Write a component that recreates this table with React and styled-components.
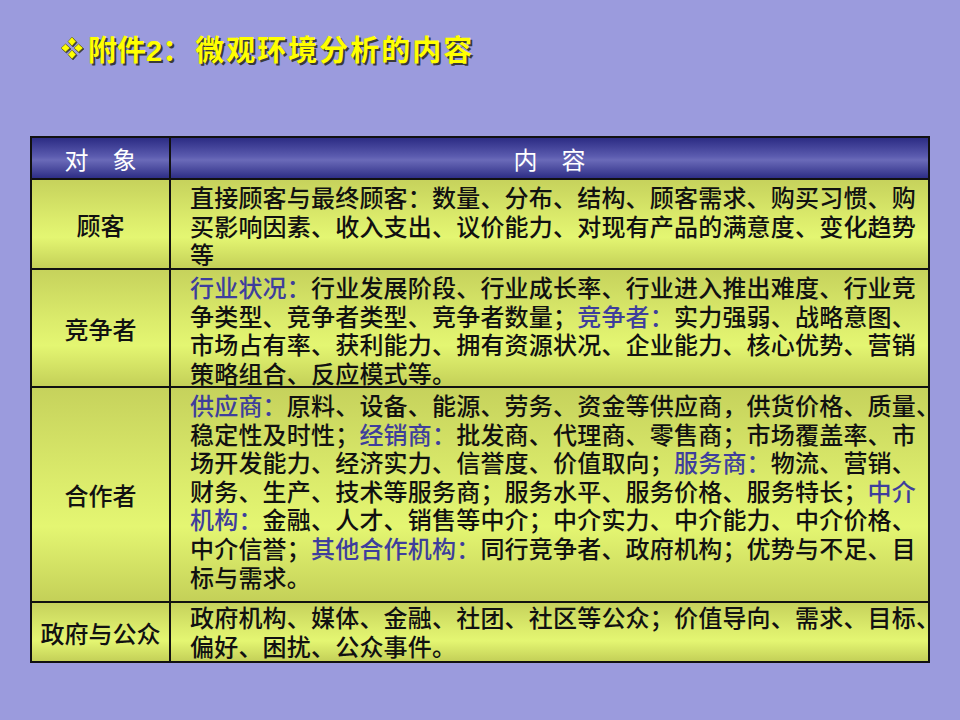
import React from 'react';
import styled, { createGlobalStyle } from 'styled-components';

const GlobalStyle = createGlobalStyle`
  html, body {
    margin: 0;
    padding: 0;
    background: #9b9bdd;
  }
  body {
    font-family: "Liberation Serif", "Noto Sans CJK SC", serif;
  }
`;

const Slide = styled.div`
  width: 960px;
  height: 720px;
  box-sizing: border-box;
  padding: 29px 30px 0 30px;
  background: #9b9bdd;
  overflow: hidden;
`;

const Title = styled.h1`
  margin: 0 0 0 30px;
  display: flex;
  align-items: center;
  height: 38px;
  font-family: "Liberation Sans", "Noto Sans CJK SC", sans-serif;
  font-size: 29px;
  font-weight: 700;
  color: #ffff00;
  text-shadow: 2px 2px 0 #3a3a3a;
`;

const Bullet = styled.svg`
  width: 24px;
  height: 24px;
  margin-right: 4px;
  filter: drop-shadow(1px 1px 0 #3a3a3a);
`;

const Wide = styled.span`
  margin-left: 4px;
  letter-spacing: 2px;
`;

const Table = styled.div`
  margin-top: 69px;
  width: 900px;
  box-sizing: border-box;
  display: grid;
  grid-template-columns: 139px minmax(0, 1fr);
  border: 2px solid #111;
`;

const HeadCell = styled.div`
  height: 42px;
  box-sizing: border-box;
  display: flex;
  align-items: center;
  justify-content: center;
  border-bottom: 2px solid #111;
  border-right: ${(p) => (p.$first ? '2px solid #111' : 'none')};
  background: linear-gradient(to bottom, #2c2c84 0%, #5a5aae 45%, #6a6ab8 55%, #2e2e86 100%);
  color: #ffffff;
  font-family: "Liberation Sans", "Noto Sans CJK SC", sans-serif;
  font-size: 24px;
  font-weight: 400;
`;

const Label = styled.div`
  height: ${(p) => p.$h}px;
  box-sizing: border-box;
  display: flex;
  align-items: center;
  justify-content: center;
  border-right: 2px solid #111;
  border-bottom: ${(p) => (p.$last ? 'none' : '2px solid #111')};
  background: linear-gradient(to bottom, #c6d25c 0%, #dcec6c 45%, #e4f672 65%, #c4d058 100%);
  color: #111;
  font-size: 24px;
  font-weight: 500;
  white-space: nowrap;
`;

const Content = styled.div`
  height: ${(p) => p.$h}px;
  box-sizing: border-box;
  padding: ${(p) => (p.$last ? '2px' : '5px')} 0 0 19px;
  border-bottom: ${(p) => (p.$last ? 'none' : '2px solid #111')};
  background: linear-gradient(to bottom, #c6d25c 0%, #dcec6c 45%, #e4f672 65%, #c4d058 100%);
  color: #111;
  font-size: 24px;
  font-weight: 500;
  line-height: 28.6px;
  letter-spacing: 0.2px;
`;

const Line = styled.div`
  white-space: nowrap;
`;

const Key = styled.span`
  color: #3e3e9c;
`;

const rows = [
  {
    label: '顾客',
    h: 90,
    lines: [
      ['直接顾客与最终顾客：数量、分布、结构、顾客需求、购买习惯、购'],
      ['买影响因素、收入支出、议价能力、对现有产品的满意度、变化趋势'],
      ['等'],
    ],
  },
  {
    label: '竞争者',
    h: 118,
    lines: [
      [{ k: '行业状况：' }, '行业发展阶段、行业成长率、行业进入推出难度、行业竞'],
      ['争类型、竞争者类型、竞争者数量；', { k: '竞争者：' }, '实力强弱、战略意图、'],
      ['市场占有率、获利能力、拥有资源状况、企业能力、核心优势、营销'],
      ['策略组合、反应模式等。'],
    ],
  },
  {
    label: '合作者',
    h: 215,
    lines: [
      [{ k: '供应商：' }, '原料、设备、能源、劳务、资金等供应商，供货价格、质量、'],
      ['稳定性及时性；', { k: '经销商：' }, '批发商、代理商、零售商；市场覆盖率、市'],
      ['场开发能力、经济实力、信誉度、价值取向；', { k: '服务商：' }, '物流、营销、'],
      ['财务、生产、技术等服务商；服务水平、服务价格、服务特长；', { k: '中介' }],
      [{ k: '机构：' }, '金融、人才、销售等中介；中介实力、中介能力、中介价格、'],
      ['中介信誉；', { k: '其他合作机构：' }, '同行竞争者、政府机构；优势与不足、目'],
      ['标与需求。'],
    ],
  },
  {
    label: '政府与公众',
    h: 58,
    last: true,
    lines: [
      ['政府机构、媒体、金融、社团、社区等公众；价值导向、需求、目标、'],
      ['偏好、困扰、公众事件。'],
    ],
  },
];

const DiamondBullet = () => (
  <Bullet viewBox="0 0 24 24">
    <path d="M12 1 L16 5.5 L12 10 L8 5.5 Z" fill="#ffff00" stroke="#5a5a20" strokeWidth="0.6" />
    <path d="M12 14 L16 18.5 L12 23 L8 18.5 Z" fill="#ffff00" stroke="#5a5a20" strokeWidth="0.6" />
    <path d="M1 12 L5.5 8 L10 12 L5.5 16 Z" fill="#ffff00" stroke="#5a5a20" strokeWidth="0.6" />
    <path d="M14 12 L18.5 8 L23 12 L18.5 16 Z" fill="#ffff00" stroke="#5a5a20" strokeWidth="0.6" />
  </Bullet>
);

const App = () => (
  <>
    <GlobalStyle />
    <Slide>
      <Title>
        <DiamondBullet />
        附件2：
        <Wide>微观环境分析的内容</Wide>
      </Title>
      <Table>
        <HeadCell $first>对　象</HeadCell>
        <HeadCell>内　容</HeadCell>
        {rows.map((row) => (
          <React.Fragment key={row.label}>
            <Label $h={row.h} $last={row.last}>{row.label}</Label>
            <Content $h={row.h} $last={row.last}>
              {row.lines.map((parts, i) => (
                <Line key={i}>
                  {parts.map((p, j) =>
                    typeof p === 'string' ? p : <Key key={j}>{p.k}</Key>
                  )}
                </Line>
              ))}
            </Content>
          </React.Fragment>
        ))}
      </Table>
    </Slide>
  </>
);

export default App;
